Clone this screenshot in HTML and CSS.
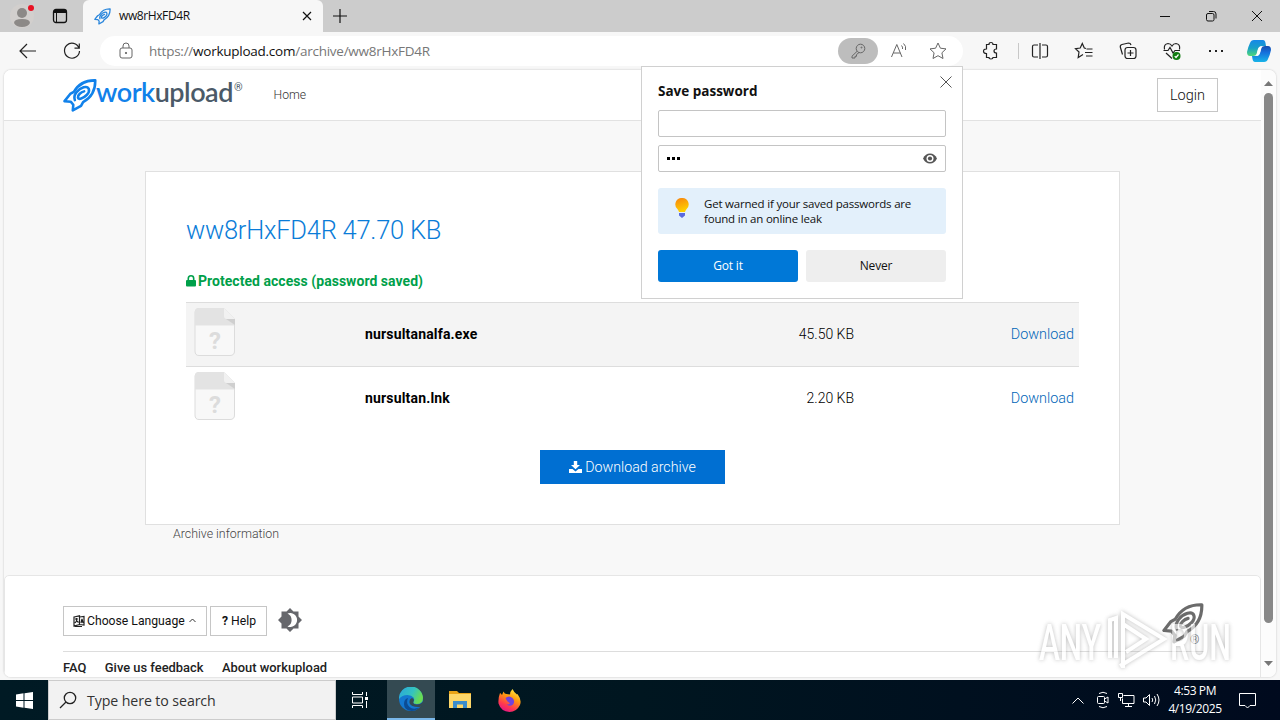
FILE: index.html
```html
<!DOCTYPE html>
<html lang="en">
<head>
  <meta charset="UTF-8" />
  <meta name="viewport" content="width=device-width, initial-scale=1.0"/>
  <title>ww8rHxFD4R</title>
  <link rel="stylesheet" href="styles.css">
</head>
<body>
  <svg class="defs" width="0" height="0">
    <symbol id="rocket" viewBox="0 0 33 32">
      <path d="M31.3 1.3C21 1 14.500 5.500 10.500 12.500L7 14.500L1.500 21.500L7.500 22L10 25L9.500 30.500L17.500 26L19.500 22.500C27 18.500 31.500 11 31.300 1.300Z"/>
      <path d="M11.500 20.500C9.500 15 15 9.500 20 8C25.500 6.500 27 11.500 23 15.500C19.500 19 15 20.500 14.500 18C14.200 15.500 17.500 12.800 20.500 12"/>
    </symbol>
    <symbol id="file" viewBox="0 0 42 50">
      <path d="M5 1.500H30L40.500 12V44Q40.500 48.500 36 48.500H5Q1 48.500 1 44V5Q1 1.500 5 1.500Z" fill="#f8f8f8" stroke="#dcdcdc"/>
      <path d="M5 1H30L40 11V18.500H1V5Q1 1 5 1Z" fill="#e3e3e3"/>
      <path d="M30 1L41 12H33Q30 12 30 9Z" fill="#f1f1f1"/>
      <path d="M32 12H41V18Z" fill="#cfcfcf"/>
    </symbol>
  </svg>

  <div class="titlebar">
    <div class="profile">
      <svg width="28" height="28" viewBox="0 0 28 28"><circle cx="14" cy="14" r="12" fill="#d2cfcd"/><circle cx="14" cy="11" r="5" fill="#8c8987"/><path d="M6 21Q6 17 14 17T22 21Q20 25 14 25T6 21Z" fill="#8c8987"/><circle cx="23" cy="6" r="3" fill="#e81123"/></svg>
    </div>
    <svg class="workspaces" width="16" height="16" viewBox="0 0 16 16" fill="none" stroke="#111"><rect x="1.500" y="1.500" width="13" height="13" rx="2.500" stroke-width="1.300"/><path d="M2 3.500H14" stroke-width="3"/><path d="M4.500 4V14"/></svg>
    <div class="tab">
      <svg class="tab-icon" width="17" height="17"><use href="#rocket"/></svg>
      <span class="tab-title">ww8rHxFD4R</span>
      <svg width="10" height="10" viewBox="0 0 10 10" stroke="#111" stroke-width="1.200"><path d="M1 1L9 9M9 1L1 9"/></svg>
    </div>
    <svg class="newtab" width="14" height="14" viewBox="0 0 14 14" stroke="#111" stroke-width="1.200"><path d="M7 0V14M0 7H14"/></svg>
    <div class="win-buttons">
      <svg width="12" height="12" viewBox="0 0 12 12"><path d="M1 6.500H11"/></svg>
      <svg width="12" height="12" viewBox="0 0 12 12"><rect x="1.500" y="3.500" width="7.500" height="7.500" rx="1.500"/><path d="M4 1.500H8.500Q11 1.500 11 4V8.500"/></svg>
      <svg width="12" height="12" viewBox="0 0 12 12"><path d="M1 1L11 11M11 1L1 11"/></svg>
    </div>
  </div>

  <div class="toolbar">
    <div class="tool"><svg viewBox="0 0 20 20"><path d="M18 10H2.500M9 3L2 10L9 17"/></svg></div>
    <div class="tool"><svg viewBox="0 0 20 20"><path d="M17 7A7.500 7.500 0 1 0 17.500 10M17.300 2.500V7.200H12.500"/></svg></div>
    <div class="address">
      <svg class="lock" viewBox="0 0 20 20"><rect x="4" y="7" width="12" height="10" rx="2"/><path d="M7 7V5A3 3 0 0 1 13 5V7"/><circle cx="10" cy="12" r=".7" fill="#666"/></svg>
      <div class="url"><span>https://</span><b>workupload.com</b><span>/archive/ww8rHxFD4R</span></div>
      <div class="key"><svg viewBox="0 0 20 20"><circle cx="12.500" cy="7.500" r="4.300"/><path d="M9.200 10.200L4 15.200V17H7V15.300H8.500V13.600L11 11.500"/><circle cx="13.500" cy="6.500" r=".5"/></svg></div>
      <svg class="read" viewBox="0 0 20 20"><path d="M2.500 16L7.800 3.500L13 16M4.300 12H11.300M12.500 4.500Q14 6 13.500 8M14.500 2.500Q17.500 5 16.500 9"/></svg>
      <svg class="star" viewBox="0 0 20 20"><path d="M10 2L12.400 7.200L18 7.900L13.900 11.800L15 17.500L10 14.700L5 17.500L6.100 11.800L2 7.900L7.600 7.200Z"/></svg>
    </div>
    <div class="tools">
      <div class="tool ext"><svg viewBox="0 0 20 20"><path d="M5.500 3.500H8Q8 1.500 10 1.500T12 3.500H15.500V8Q13 8 13 10T15.500 12V16.500H12Q12 18 10 18T8 16.500H5.500V12.500Q2.500 12.500 2.500 10.200T5.500 8Z"/></svg></div>
      <div class="divider"></div>
      <div class="tool"><svg viewBox="0 0 20 20"><path d="M8 4H4Q2.500 4 2.500 5.500V14.500Q2.500 16 4 16H8M12 4H16Q17.500 4 17.500 5.500V14.500Q17.500 16 16 16H12M10 2V18"/></svg></div>
      <div class="tool"><svg viewBox="0 0 20 20"><path d="M12 7.500L10.300 7L8.300 2.500L6.200 7L1.500 7.700L5 11L4.200 16.500L9 13.500M12.500 8H18.500M11 11.500H18.500M12 15H18.500"/></svg></div>
      <div class="tool"><svg viewBox="0 0 20 20"><rect x="7" y="6.500" width="11" height="11" rx="2.500"/><path d="M12.500 9V15M9.500 12H15.500M4.500 13.500L2.300 6Q2 4 4 3.500L10.500 2Q12.500 2 13 4"/></svg></div>
      <div class="tool"><svg viewBox="0 0 20 20"><path d="M2.500 8.500Q1.500 3 6 2.500Q8.500 2.500 10 5Q11.500 2.500 14 2.500Q18.500 3 17.500 8.500M1.500 9.500H6L8 6.500L11 12L13 9.500H18M4 12L10 17.500"/><circle cx="14.500" cy="15" r="4" fill="#107c10" stroke="none"/><path d="M12.700 15.200L14 16.500L16.500 13.500" stroke="#fff"/></svg></div>
      <div class="tool"><svg viewBox="0 0 20 20"><path d="M3 10H5M9 10H11M15 10H17" stroke-width="2"/></svg></div>
      <div class="tool copilot"><svg viewBox="0 0 24 22">
        <defs><linearGradient id="cpA" x1="0" y1="0" x2="0" y2="1"><stop offset="0" stop-color="#1688e8"/><stop offset=".5" stop-color="#18a0c8"/><stop offset="1" stop-color="#50d878"/></linearGradient><linearGradient id="cpB" x1="0" y1="1" x2="0" y2="0"><stop offset="0" stop-color="#18b4e8"/><stop offset=".6" stop-color="#1670dc"/><stop offset="1" stop-color="#164cae"/></linearGradient></defs>
        <path d="M7 0H16Q18 0 18.500 3L19 6H15Q12 6 11 9L9.500 14Q9 16 6 16H3Q0 16 0 12Q1 7 3 3Q4 0 7 0Z" fill="url(#cpA)" stroke="none"/>
        <path d="M17 22H8Q6 22 5.500 19L5 16H9Q12 16 13 13L14.500 8Q15 6 18 6H21Q24 6 24 10Q23 15 21 19Q20 22 17 22Z" fill="url(#cpB)" stroke="none"/>
        <path d="M11 9L9.500 16Q12 16 13 13L14.500 6.500Q12 6 11 9Z" fill="#fff" stroke="none"/>
      </svg></div>
    </div>
  </div>

  <div class="browser">
    <div class="page">
      <header class="site-header">
        <svg class="logo-rocket" width="34" height="33"><use href="#rocket"/></svg>
        <div class="logo-text"><span>work</span>upload</div>
        <sup class="reg">®</sup>
        <a class="home">Home</a>
        <a class="login">Login</a>
      </header>

      <main>
        <section class="card">
          <h1>ww8rHxFD4R 47.70 KB</h1>
          <p class="protected"><svg width="10" height="12" viewBox="0 0 10 12"><rect y="5" width="10" height="6.500" rx="1"/><path d="M2.300 6V3.500A2.700 2.700 0 0 1 7.700 3.500V6" fill="none" stroke="#00a04a" stroke-width="1.600"/></svg><span>Protected access (password saved)</span></p>
          <div class="files">
            <div class="file">
              <svg class="file-icon"><use href="#file"/><text x="21" y="42" text-anchor="middle">?</text></svg>
              <div class="name">nursultanalfa.exe</div>
              <div class="size">45.50 KB</div>
              <a class="download">Download</a>
            </div>
            <div class="file">
              <svg class="file-icon"><use href="#file"/><text x="21" y="42" text-anchor="middle">?</text></svg>
              <div class="name">nursultan.lnk</div>
              <div class="size">2.20 KB</div>
              <a class="download">Download</a>
            </div>
          </div>
          <a class="archive"><svg width="13" height="12" viewBox="0 0 13 12" fill="#fff"><path d="M4.800 0H8.200V4H11L6.500 8.300L2 4H4.800ZM0 8H3.500L6.500 10.500L9.500 8H13V12H0Z"/></svg><span>Download archive</span></a>
        </section>
        <div class="info">Archive information</div>
      </main>

      <footer>
        <div class="footer-row">
          <a class="btn lang"><svg width="12" height="12" viewBox="0 0 12 12" fill="none" stroke="#222" stroke-width="1.200"><path d="M1 2L6.500 .8V9.500L1 11ZM6.500 2L11 1.500V10L6.500 9.500M2 4H5M3.500 3V6L2 8M4 6L5.500 7.500M8 8L9 4L10 8M2 11.500H9"/></svg><span>Choose Language</span><svg class="caret" width="7" height="5" viewBox="0 0 7 5" fill="none" stroke="#333"><path d="M.5 4L3.500 1L6.500 4"/></svg></a>
          <a class="btn help"><b>?</b> <span>Help</span></a>
          <svg class="theme" width="24" height="24" viewBox="0 0 24 24"><path d="M12 0L15.500 3.500H20.500V8.500L24 12L20.500 15.500V20.500H15.500L12 24L8.500 20.500H3.500V15.500L0 12L3.500 8.500V3.500H8.500Z" fill="#66676c"/><path d="M9.500 5.500A7 7 0 1 1 9.500 18.500A7.200 7.200 0 0 0 9.500 5.500Z" fill="#fff"/></svg>
          <div class="footer-logo">
            <svg width="42" height="41"><use href="#rocket"/></svg>
            <span>®</span>
          </div>
        </div>
        <div class="links"><a>FAQ</a><a>Give us feedback</a><a>About workupload</a></div>
      </footer>
    </div>
    <div class="scrollbar">
      <svg width="9" height="5" viewBox="0 0 9 5"><path d="M0 5L4.500 0L9 5Z"/></svg>
      <div class="thumb"></div>
      <svg width="9" height="5" viewBox="0 0 9 5"><path d="M0 0L4.500 5L9 0Z"/></svg>
    </div>
  </div>

  <div class="popup">
    <svg class="popup-close" width="12" height="12" viewBox="0 0 12 12" stroke="#555"><path d="M.5 .5L11.500 11.500M11.500 .5L.5 11.500"/></svg>
    <h2>Save password</h2>
    <div class="field"></div>
    <div class="field"><svg width="14" height="4" viewBox="0 0 14 4"><path d="M0 0H3V3H0ZM5 0H8V3H5ZM10 0H13V3H10Z"/></svg><svg width="16" height="12" viewBox="0 0 16 12"><path d="M1 5.500Q3.500 .5 8 .5T15 5.500Q12.500 10.500 8 10.500T1 5.500Z" fill="#555"/><circle cx="8" cy="5.500" r="3.500" fill="#fff"/><circle cx="8" cy="5.500" r="2.100" fill="#555"/></svg></div>
    <div class="tip">
      <svg width="14" height="21" viewBox="0 0 14 21"><defs><linearGradient id="bulb" x1="0" y1="0" x2=".3" y2="1"><stop offset="0" stop-color="#f7830f"/><stop offset="1" stop-color="#ffd000"/></linearGradient></defs><path d="M7 0A6.300 6.300 0 0 1 12 10.500Q10.500 12 10 14H4Q3.500 12 2 10.500A6.300 6.300 0 0 1 7 0Z" fill="url(#bulb)"/><path d="M4 15H10V17.500L7 20L4 17.500Z" fill="#5b6be0"/></svg>
      <p>Get warned if your saved passwords are<br>found in an online leak</p>
    </div>
    <div class="popup-buttons"><button class="primary">Got it</button><button>Never</button></div>
  </div>

  <svg class="watermark" width="200" height="70" viewBox="0 0 200 70">
    <text x="3" y="52" textLength="62" lengthAdjust="spacingAndGlyphs">ANY</text>
    <path d="M74 50V12L80 10V50M87 60V6L128 31L84 58M87 16L110 31L90 44"/>
    <text x="134" y="52" textLength="61" lengthAdjust="spacingAndGlyphs">RUN</text>
  </svg>

  <div class="taskbar">
    <div class="start"><svg width="17" height="17" viewBox="0 0 17 17" fill="#fff"><path d="M0 2.500L7.500 1.300V8H0ZM8.500 1.200L17 0V8H8.500ZM0 9H7.500V15.700L0 14.500ZM8.500 9H17V17L8.500 15.800Z"/></svg></div>
    <div class="search"><svg width="18" height="18" viewBox="0 0 18 18" fill="none" stroke="#222" stroke-width="1.300"><circle cx="11" cy="7" r="5.700"/><path d="M7 11L1 17"/></svg><span>Type here to search</span></div>
    <div class="app"><svg width="18" height="18" viewBox="0 0 18 18" fill="none" stroke="#fff"><path d="M1.500 1V3.500H11.500V1M1.500 17V14.500H11.500V17M1.500 6H11.500V12H1.500ZM15.500 1V5M15.500 10V17"/><rect x="14.500" y="6.500" width="2" height="2" fill="#fff"/></svg></div>
    <div class="app active"><svg width="24" height="24" viewBox="0 0 24 24">
      <defs><linearGradient id="edA" x1="0" y1="0" x2="1" y2=".4"><stop offset="0" stop-color="#2aa6dc"/><stop offset=".6" stop-color="#34c3c0"/><stop offset="1" stop-color="#69dc52"/></linearGradient></defs>
      <circle cx="12" cy="12" r="12" fill="#1478d0"/>
      <path d="M0 12A12 12 0 0 1 24 11Q24 17 17.500 17Q14 17 14.300 15Q16 13 14.500 10.500Q12.500 8 8.500 8Q3 8 0 12Z" fill="url(#edA)"/>
      <path d="M9 11Q6.500 16 10.500 20Q14 23 20 20.500Q17 24 12.500 24Q5 23 5 17Q5 12 9 11Z" fill="#0c4c94"/>
      <path d="M14.300 15Q14 17.500 18 17.500Q21 17.500 24 15V18L21 20Q12 20.500 10.500 16Q10 12 13 11Q16 12 14.300 15Z" fill="#344a52"/></svg></div>
    <div class="app"><svg width="22" height="20" viewBox="0 0 22 20"><path d="M0 1H8L10 3H22V18H0Z" fill="#e8a317"/><path d="M0 4H22V18H0Z" fill="#fcd669"/><path d="M4 18V11H18V18H14V14.500H8V18Z" fill="#3a8ccc"/></svg></div>
    <div class="app"><svg width="23" height="23" viewBox="0 0 23 23">
      <defs><linearGradient id="ff" x1=".8" y1="0" x2=".3" y2="1"><stop offset="0" stop-color="#fff044"/><stop offset=".4" stop-color="#ff980e"/><stop offset=".75" stop-color="#ff3750"/><stop offset="1" stop-color="#e31587"/></linearGradient></defs>
      <path d="M2 4Q3 4.500 4 6L5.500 2.500Q6.500 5 8.500 5Q10 5 12 5.500Q12 2.500 14.500 0Q16 3.500 19 5.500L19.500 5Q24 11 22 16Q18.500 23 11.500 23Q3 22.500 .5 14.500Q0 9 2 4Z" fill="url(#ff)"/>
      <path d="M7.500 9Q11 6 14.500 9Q17.500 12 15 15.500Q12 18 8.500 15.500Q11 16 12 14Q9 13 7.500 9Z" fill="#7142dd"/></svg></div>
    <div class="tray">
      <svg width="12" height="7" viewBox="0 0 12 7"><path d="M.5 6.500L6 1L11.500 6.500"/></svg>
      <svg width="14" height="18" viewBox="0 0 14 18"><rect x="1.500" y="5.500" width="7" height="7" rx="1"/><path d="M8.500 8L12 6V12L8.500 10M3 2.500Q7 0 11 2.500M3 15.500Q7 18 11 15.500"/></svg>
      <svg width="17" height="16" viewBox="0 0 17 16"><path d="M5.500 3.500H16V11.500H4.500V6.500M10.500 11.500V14.500M7 14.500H14M.5 1.500H4.500V5.500H.5ZM2.500 5.500V9"/></svg>
      <svg width="17" height="14" viewBox="0 0 17 14"><path d="M.5 5H3L6.500 1.500V12.500L3 9H.5ZM9 5Q10.500 7 9 9M11.500 3Q14 7 11.500 11M14 1Q18 7 14 13"/></svg>
    </div>
    <div class="clock"><div>4:53 PM</div><div>4/19/2025</div></div>
    <svg class="notice" width="17" height="17" viewBox="0 0 17 17" fill="none" stroke="#fff"><path d="M.5 1.500H16.500V13.500H11L8.500 16L6 13.500H.5Z"/></svg>
  </div>
</body>
</html>
```
FILE: styles.css
```css
* { box-sizing: border-box; }
body {
  margin: 0; width: 1280px; height: 720px; overflow: hidden; position: relative;
  display: flex; flex-direction: column; background: #f7f7f7;
  font-family: "Open Sans", "Noto Sans", sans-serif; font-size: 12px; color: #111;
}
svg { display: block; flex: none; }
.defs { position: absolute; }
#rocket path { fill: none; stroke-width: 2.5; stroke-linejoin: round; stroke-linecap: round; }

/* title bar */
.titlebar { height: 32px; flex: none; display: flex; background: #ccc; align-items: center; }
.profile { width: 52px; padding-left: 8px; }
.tab {
  width: 240px; height: 32px; margin-left: 15px; padding: 0 11px; background: #f7f7f7;
  border-radius: 6px 6px 0 0; display: flex; align-items: center;
}
.tab-icon { stroke: #2a86dc; }
.tab-title { flex: 1; margin: -1px 0 0 8px; letter-spacing: -0.4px; }
.newtab { margin-left: 10px; }
.win-buttons { margin-left: auto; margin-right: 17px; display: flex; gap: 34px; fill: none; stroke: #111; }

/* toolbar */
.toolbar { height: 38px; flex: none; display: flex; align-items: center; padding-left: 6px; }
.tool { width: 44px; display: flex; justify-content: center; flex: none; }
.tool svg { width: 20px; height: 20px; fill: none; stroke: #222; stroke-width: 1.2; }
.address {
  width: 863px; height: 30px; margin-left: 6px; background: #fff; border-radius: 15px;
  display: flex; align-items: center; padding: 0 15px 0 16px;
}
.address svg { width: 20px; height: 20px; fill: none; stroke: #666; }
.url { margin-left: 13px; flex: 1; font-size: 13.5px; color: #777; letter-spacing: -0.25px; }
.url b { font-weight: normal; color: #111; }
.key { width: 40px; height: 26px; border-radius: 13px; background: #bdbdbd; display: flex; align-items: center; justify-content: center; }
.read { margin-left: 11px; }
.star { margin-left: 19px; }
.tools { display: flex; align-items: center; margin-left: 6px; }
.ext { margin-right: 5px; }
.divider { width: 1px; height: 16px; background: #c8c8c8; margin-right: -1px; }
.copilot { width: 42px; }
.copilot svg { width: 24px; height: 22px; }

/* browser content */
.browser {
  height: 607px; margin: 0 4px; flex: none; display: flex; overflow: hidden;
  border-radius: 7px; background: #fff; box-shadow: 0 0 2px #bbb;
}
.page { width: 1257px; display: flex; flex-direction: column; font-family: Roboto, "Liberation Sans", sans-serif; background: #f8f8f8; }
.site-header {
  height: 51px; flex: none; background: #fff; border-bottom: 1px solid #e2e2e2;
  display: flex; align-items: center; padding: 0 43px 0 59px;
}
.logo-rocket { stroke: #1181ea; }
.logo-text { font: 600 27px/30px Lato, sans-serif; color: #4b5a68; letter-spacing: -0.5px; margin: -6px 0 0 -1px; }
.logo-text span { color: #1181ea; }
.reg { font-size: 11px; color: #4b5a68; margin: -15px 0 0 1px; line-height: 12px; }
.home { margin: -1px 0 0 31px; font-size: 12.2px; font-weight: 300; color: #333; }
.login { margin-left: auto; width: 61px; height: 34px; border: 1px solid #c6c6c6; font-size: 14.5px; font-weight: 300; line-height: 33px; text-align: center; }
main { height: 454px; flex: none; padding: 50px 0 0 141px; }
.card { width: 975px; height: 354px; background: #fff; border: 1px solid #e0e0e0; padding: 0 40px; }
h1 { margin: 42px 0 0; font-size: 25.5px; line-height: 32px; font-weight: 300; letter-spacing: -0.25px; color: #0a7cd8; }
.protected { display: flex; align-items: center; gap: 2px; margin: 26px 0 0; height: 18px; color: #00a04a; fill: #00a04a; font-size: 14px; font-weight: 700; letter-spacing: .04px; }
.files { margin-top: 12px; }
.file { height: 64px; display: flex; align-items: center; border-top: 1px solid #ddd; padding: 0 5px 2px 8px; font-size: 14px; }
.file:first-child { background: #f4f4f4; }
.file-icon { width: 42px; height: 50px; margin-top: -3px; }
.file-icon text { font: bold 24px Roboto, sans-serif; fill: #dcdcdc; }
.name { margin-left: 129px; width: 260px; font-weight: 700; letter-spacing: .17px; color: #000; }
.size { width: 229px; text-align: right; font-weight: 300; color: #000; }
.download { margin: 2px 0 0 auto; color: #0066b8; font-weight: 300; font-size: 14.4px; }
.archive {
  width: 185px; height: 34px; margin: 20px 0 0 354px; background: #006fd2; color: #fff;
  display: flex; align-items: center; justify-content: center; gap: 3px; font-size: 14.2px; font-weight: 300;
}
.info { margin: 1px 0 0 28px; font-size: 12.4px; line-height: 16px; font-weight: 300; color: #444; }
footer { flex: 1; background: #fff; border: 1px solid #e6e6e6; border-radius: 5px 5px 0 0; padding: 27px 56px 0 58px; }
.footer-row { height: 49px; display: flex; align-items: flex-start; border-bottom: 1px solid #ddd; }
.btn { height: 30px; margin-top: 3px; border: 1px solid #c6c6c6; display: flex; align-items: center; font-size: 12.2px; gap: 2px; padding: 0 0 1px 9px; }
.lang { width: 144px; }
.caret { margin-left: 2px; }
.help { width: 57px; margin-left: 3px; padding-left: 11px; gap: 3px; }
.theme { margin: 5px 0 0 11px; }
.footer-logo { margin-left: auto; margin-right: 3px; display: flex; stroke: #6b6b6b; }
.footer-logo span { width: 12px; font-size: 12px; color: #777; margin: 30px -1px 0 -14px; }
.links { display: flex; gap: 18.5px; padding-top: 7px; font-size: 12.9px; font-weight: 500; line-height: 18px; color: #222; }
.scrollbar { width: 15px; display: flex; flex-direction: column; align-items: center; padding: 11px 0 11px; background: #fcfcfc; fill: #777; }
.thumb { width: 9px; height: 530px; margin: 7px 0 auto; border-radius: 5px; background: #888; }

/* save password bubble */
.popup {
  position: absolute; left: 641px; top: 66px; width: 322px; height: 233px;
  background: #fff; border: 1px solid #d0d0d0; padding: 15px 16px;
}
.popup-close { position: absolute; right: 10px; top: 9px; }
.popup h2 { margin: 0 0 9px; font-size: 13.5px; line-height: 19px; font-weight: 700; }
.field { height: 27px; margin-bottom: 8px; border: 1px solid #c4c4c4; border-radius: 2px; display: flex; align-items: center; justify-content: space-between; padding: 0 7px 0 8px; }
.tip { height: 46px; margin-top: 16px; background: #e3f0fb; border-radius: 3px; display: flex; padding: 10px 0 0 17px; }
.tip p { margin: -2px 0 0 15px; font-size: 11.5px; line-height: 15px; letter-spacing: -0.2px; }
.popup-buttons { display: flex; gap: 8px; margin-top: 16px; }
.popup button { width: 140px; height: 32px; border: 0; border-radius: 3px; background: #eee; font: 12px "Open Sans", sans-serif; letter-spacing: -0.2px; color: #111; padding: 0 0 1px; }
.popup .primary { background: #0078d7; color: #fff; }

.watermark { position: absolute; left: 1036px; top: 608px; overflow: visible; opacity: .65; filter: drop-shadow(0 0 2px #999); }
.watermark text { font: 500 50px Roboto, sans-serif; fill: #fff; }
.watermark path { fill: none; stroke: #fff; stroke-width: 4; }

/* taskbar */
.taskbar { height: 40px; margin-top: 3px; flex: none; display: flex; align-items: center; background: linear-gradient(90deg, #001a24, #001620 50%, #000a1e); color: #fff; }
.start { width: 48px; padding-left: 16px; }
.search { width: 288px; height: 40px; background: #f2f2f2; border: 1px solid #ccc; display: flex; align-items: center; gap: 10px; padding-left: 10px; color: #333; font-size: 14.2px; letter-spacing: -0.1px; }
.app { width: 48px; height: 40px; display: flex; align-items: center; justify-content: center; }
.app + .app { margin-left: 1px; }
.app.active { background: #344a52; border-bottom: 2px solid #7ab8ea; }
.app.app.active { margin-left: 3px; }
.tray { margin-left: auto; display: flex; align-items: center; gap: 8px; fill: none; stroke: #fff; }
.tray svg:nth-child(2) { margin-left: 4px; }
.clock { width: 64px; margin-left: 3px; text-align: center; font-size: 12px; line-height: 18px; letter-spacing: -0.4px; }
.notice { margin: 0 24px 0 12px; }
```
